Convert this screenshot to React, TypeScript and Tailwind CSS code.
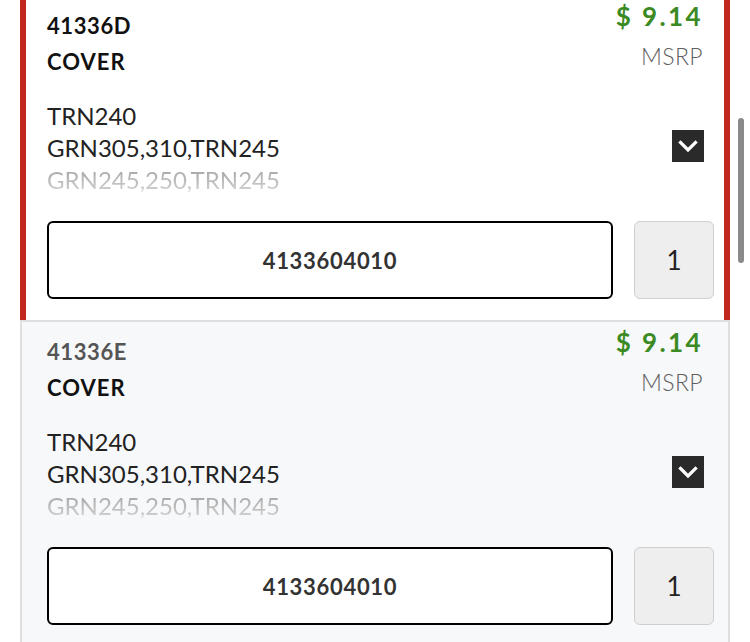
import React from "react";

type Part = {
  number: string;
  name: string;
  price: string;
  models: string[];
  code: string;
  qty: number;
  selected?: boolean;
};

const parts: Part[] = [
  {
    number: "41336D",
    name: "COVER",
    price: "$ 9.14",
    models: ["TRN240", "GRN305,310,TRN245", "GRN245,250,TRN245"],
    code: "4133604010",
    qty: 1,
    selected: true,
  },
  {
    number: "41336E",
    name: "COVER",
    price: "$ 9.14",
    models: ["TRN240", "GRN305,310,TRN245", "GRN245,250,TRN245"],
    code: "4133604010",
    qty: 1,
  },
];

function Chevron() {
  return (
    <div className="flex h-8 w-8 items-center justify-center bg-[#2a2a2a]">
      <svg width="32" height="32" viewBox="0 0 32 32" fill="none">
        <polyline
          points="8.5,12.5 16,20 23.5,12.5"
          stroke="#ffffff"
          strokeWidth="3.2"
          strokeLinecap="square"
        />
      </svg>
    </div>
  );
}

function PartCard({ part }: { part: Part }) {
  const cardClass = part.selected
    ? "border-l-[6px] border-r-[6px] border-[#c1271d] bg-white pl-[21px] pr-[10px]"
    : "border-2 border-[#dedfe1] bg-[#f7f8fa] pl-[25px] pr-[14px]";

  return (
    <div className={cardClass + " pb-[21px]"}>
      <div className="flex items-start justify-between">
        <div className="pt-4">
          <div
            className={
              "text-[22px] font-bold leading-[28px] tracking-[0.6px] " +
              (part.selected ? "text-[#111]" : "text-[#555]")
            }
          >
            {part.number}
          </div>
          <div className="mt-2 text-[22px] font-bold leading-[28px] tracking-[1px] text-[#111]">
            {part.name}
          </div>
        </div>
        <div className="mr-[11px] flex flex-col items-end pt-1">
          <div className="text-[26px] font-bold leading-[32px] tracking-[2.4px] text-[#3b8a23]">
            {part.price}
          </div>
          <div className="mt-[10px] text-[23px] font-light leading-[28px] tracking-[0.4px] text-[#5f5f5f]">
            MSRP
          </div>
        </div>
      </div>

      <div className="mt-6 flex items-center justify-between">
        <div className="text-[24px] leading-[32px] text-[#222]">
          <div>{part.models[0]}</div>
          <div>{part.models[1]}</div>
          <div className="bg-gradient-to-b from-[#9c9c9c] to-[#dadada] bg-clip-text text-transparent">
            {part.models[2]}
          </div>
        </div>
        <div className="mr-[10px] -mt-1">
          <Chevron />
        </div>
      </div>

      <div className="mt-[25px] flex gap-[21px]">
        <div className="flex h-[78px] flex-1 items-center justify-center rounded-[6px] border-2 border-black bg-white text-[22px] font-bold tracking-[0.7px] text-[#333]">
          {part.code}
        </div>
        <div className="flex h-[78px] w-[80px] items-center justify-center rounded-[6px] border-[1.5px] border-[#cfcfcf] bg-[#eeeeee] text-[26px] text-[#222]">
          {part.qty}
        </div>
      </div>
    </div>
  );
}

export default function App() {
  return (
    <div
      className="relative h-[642px] w-[750px] overflow-hidden bg-white"
      style={{ fontFamily: "Lato, 'Open Sans', sans-serif" }}
    >
      <div className="-mt-1 px-5">
        {parts.map((part) => (
          <PartCard key={part.number} part={part} />
        ))}
      </div>
      <div className="absolute left-[738px] top-[118px] h-[145px] w-[6px] rounded-full bg-[#8a8a8a]" />
    </div>
  );
}
